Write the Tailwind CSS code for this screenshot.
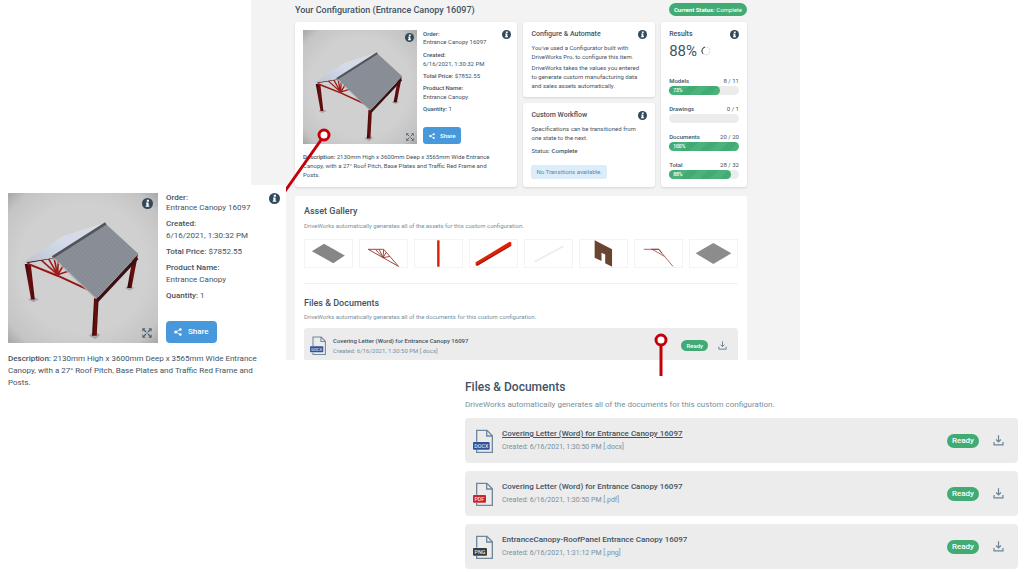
<!DOCTYPE html>
<html lang="en">

<head>
  <meta charset="UTF-8">
  <meta name="viewport" content="width=device-width, initial-scale=1.0">
  <title>DriveWorks - Your Configuration</title>
  <!-- Tailwind CSS -->
  <script src="https://cdn.jsdelivr.net/npm/@tailwindcss/browser@4"></script>
</head>

<body class="bg-white text-[#3f5364] font-['Roboto',sans-serif]">
  <!-- Shared icons -->
  <svg class="absolute size-0" aria-hidden="true">
    <defs>
      <radialGradient id="vignette" cx="50%" cy="50%" r="72%">
        <stop offset="0.6" stop-color="#d0d0d0" />
        <stop offset="0.85" stop-color="#c4c4c4" />
        <stop offset="1" stop-color="#a2a2a2" />
      </radialGradient>
      <linearGradient id="roof-left" x1="0" y1="1" x2="1" y2="0">
        <stop offset="0" stop-color="#bcc3d0" />
        <stop offset="0.5" stop-color="#d3daea" />
        <stop offset="1" stop-color="#dadde3" />
      </linearGradient>
      <linearGradient id="leg" x1="0" y1="0" x2="1" y2="0">
        <stop offset="0" stop-color="#2c0808" />
        <stop offset="0.5" stop-color="#6e0d0d" />
        <stop offset="1" stop-color="#4a0a0a" />
      </linearGradient>
      <pattern id="sheet" width="9" height="9" patternUnits="userSpaceOnUse" patternTransform="rotate(-43)">
        <rect width="9" height="9" fill="#8b9098" />
        <rect width="3" height="9" fill="#858a92" />
      </pattern>
      <pattern id="ribs" width="4" height="4" patternUnits="userSpaceOnUse" patternTransform="rotate(30)">
        <rect width="4" height="4" fill="#8b8b8b" />
        <rect width="4" height="1" fill="#777" />
      </pattern>
    </defs>
    <symbol id="info" viewBox="0 0 30 30">
      <circle cx="15" cy="15" r="15" fill="#2f4a5c" />
      <path d="M13 5h6v5h-6zM11 12h7v9h2v3h-10v-3h2v-6h-1z" fill="#fff" />
    </symbol>
    <symbol id="expand" viewBox="0 0 30 30">
      <path d="M6 6l6 6M24 6l-6 6M6 24l6-6M24 24l-6-6" stroke="#4a6070" stroke-width="3.5" />
      <path d="M1 1h10L1 11zM29 1v10L19 1zM1 29V19l10 10zM29 29H19l10-10z" fill="#4a6070" />
      <circle cx="15" cy="15" r="2" fill="#4a6070" />
    </symbol>
    <symbol id="share" viewBox="0 0 24 24">
      <path d="M19 4L5 12l14 8" fill="none" stroke="#fff" stroke-width="2.5" />
      <circle cx="19" cy="4.500" r="4" fill="#fff" />
      <circle cx="5" cy="12" r="4.500" fill="#fff" />
      <circle cx="19" cy="19.500" r="4" fill="#fff" />
    </symbol>
    <symbol id="download" viewBox="0 0 30 32">
      <path d="M2 20v9h26v-9M15 1v19M8 13l7 7 7-7" fill="none" stroke="#6c8494" stroke-width="3.500" />
    </symbol>
    <symbol id="page" viewBox="0 0 60 72">
      <path d="M11 38V4h31l16 16v50H11v-7M41 4v17h17" fill="none" stroke="#71889a" stroke-width="4" />
    </symbol>
    <symbol id="canopy" viewBox="0 0 448 448">
      <rect width="448" height="448" fill="url(#vignette)" />
      <path d="M60 318l16-8 16 8-16 8zM241 426l18-12 16 9-14 14zM349 284l14-8 14 8-14 7z" fill="#a6a6ae" />
      <path d="M50 212h18l12 106H69z" fill="url(#leg)" />
      <path d="M372 196l16-12-19 100h-13z" fill="url(#leg)" />
      <path d="M257 314l14-4-6 116h-14z" fill="url(#leg)" />
      <path d="M58 211l90 36 102 47" fill="none" stroke="#961616" stroke-width="6" />
      <path d="M148 244L97 198M148 244l-27-48M148 244l-10-48M148 244l2-40M148 244l18-28M148 244l36-12" stroke="#a01c1c" stroke-width="5" />
      <path d="M56 207l80-14" stroke="#47191a" stroke-width="5" />
      <path d="M266 322l120-128" stroke="#3b1013" stroke-width="10" />
      <path d="M44 208L100 170l66-42 115-36 8 4-153 98z" fill="url(#roof-left)" />
      <path d="M134 190L290 90l100 92-126 134z" fill="url(#sheet)" />
      <path d="M133 192L292 91" stroke="#50555c" stroke-width="8" />
      <path d="M134 194l130 122" stroke="#aab0b8" stroke-width="3" />
    </symbol>
  </svg>

  <main class="relative">
    <!-- Configuration dashboard -->
    <section class="ml-[251px] mr-[224px] bg-[#f3f3f3] pl-11 pr-[53px] pt-[3px]">
      <header class="flex h-[13px] items-center justify-between">
        <h1 class="text-[9px] leading-[12px] font-medium">Your Configuration (Entrance Canopy 16097)</h1>
        <span class="rounded-full bg-[#42ab74] px-[5px] text-[6px] leading-[13px] text-white"><b>Current Status:</b> Complete</span>
      </header>

      <div class="mt-[6px] grid grid-cols-[223fr_132fr_86fr] gap-[6px]">
        <article class="rounded-[3px] bg-white py-2 pr-[6px] pl-2 shadow-sm">
          <div class="flex gap-[6px]">
            <div class="relative size-[114px] shrink-0">
              <svg class="size-full" role="img" aria-label="Entrance canopy"><use href="#canopy" /></svg>
              <button class="absolute top-[3px] right-[3px]" aria-label="Image information"><svg class="size-[9px]"><use href="#info" /></svg></button>
              <button class="absolute bottom-[3px] right-[3px]" aria-label="Expand image"><svg class="size-[8px]"><use href="#expand" /></svg></button>
            </div>
            <div class="flex grow flex-col items-start gap-[3px] text-[6px] leading-[9px]">
              <p class="pb-px leading-[8px]"><b class="font-medium">Order:</b><br>Entrance Canopy 16097</p>
              <p><b class="font-medium">Created:</b><br>6/16/2021, 1:30:32 PM</p>
              <p><b class="font-medium">Total Price:</b> $7852.55</p>
              <p><b class="font-medium">Product Name:</b><br>Entrance Canopy</p>
              <p><b class="font-medium">Quantity:</b> 1</p>
              <button class="mt-auto flex items-center gap-[5px] rounded-[3px] bg-[#4799dc] px-[6px] leading-[17px] font-medium text-white">
                <svg class="size-[6px]"><use href="#share" /></svg>Share
              </button>
            </div>
            <button class="self-start" aria-label="Order information"><svg class="size-[9px]"><use href="#info" /></svg></button>
          </div>
          <p class="mt-2 pr-3 text-[6px] leading-[9px]"><b class="font-medium">Description:</b> 2130mm High x 3600mm Deep x 3565mm Wide Entrance Canopy, with a 27° Roof Pitch, Base Plates and Traffic Red Frame and Posts.</p>
        </article>

        <div class="flex flex-col gap-[6px] text-[6px] leading-[9px]">
          <article class="rounded-[3px] bg-white px-2 pt-[6px] pb-[7px] shadow-sm">
            <div class="flex items-center justify-between">
              <h2 class="text-[7px] leading-[12px] font-medium">Configure &amp; Automate</h2>
              <button aria-label="About configuring"><svg class="size-[9px]"><use href="#info" /></svg></button>
            </div>
            <p class="mt-[3px]">You've used a Configurator built with<br>DriveWorks Pro, to configure this item.</p>
            <p class="mt-[2px]">DriveWorks takes the values you entered<br>to generate custom manufacturing data<br>and sales assets automatically.</p>
          </article>
          <article class="grow rounded-[3px] bg-white px-2 pt-[6px] pb-2 shadow-sm">
            <div class="flex items-center justify-between">
              <h2 class="text-[7px] leading-[12px] font-medium">Custom Workflow</h2>
              <button aria-label="About the workflow"><svg class="size-[9px]"><use href="#info" /></svg></button>
            </div>
            <p class="mt-[3px]">Specifications can be transitioned from<br>one state to the next.</p>
            <p class="mt-1">Status: <b class="font-medium">Complete</b></p>
            <p class="mt-[10px] inline-block rounded-[2px] bg-[#dcecf9] px-[5px] leading-[14px] text-[#4b8cc4]">No Transitions available.</p>
          </article>
        </div>

        <article class="flex flex-col rounded-[3px] bg-white px-2 pt-[6px] pb-2 text-[6px] leading-[10px] shadow-sm">
          <div class="flex items-center justify-between">
            <h2 class="text-[7px] leading-[12px] font-medium">Results</h2>
            <button aria-label="About the results"><svg class="size-[9px]"><use href="#info" /></svg></button>
          </div>
          <div class="mt-[3px] flex items-center gap-1 text-[15px] leading-[16px]">88%
            <svg class="size-[10px]" viewBox="0 0 30 30" fill="none" stroke-width="3">
              <circle cx="15" cy="15" r="12" stroke="#e2e2e2" />
              <path d="M6 23A12 12 0 0 1 12 3" stroke="#333" />
            </svg>
          </div>
          <div class="mt-auto flex flex-col gap-[9px]">
            <div>
              <div class="flex justify-between"><b class="font-medium">Models</b><span>8 / 11</span></div>
              <div class="h-[9px] rounded-full bg-[#ececec]">
                <div class="h-full rounded-full bg-[repeating-linear-gradient(135deg,#42ab74_0_7px,#4db17c_7px_14px)] pl-1 text-[5px] leading-[9px] font-medium text-white" style="width: 73%">73%</div>
              </div>
            </div>
            <div>
              <div class="flex justify-between"><b class="font-medium">Drawings</b><span>0 / 1</span></div>
              <div class="h-[9px] rounded-full bg-[#ececec]"></div>
            </div>
            <div>
              <div class="flex justify-between"><b class="font-medium">Documents</b><span>20 / 20</span></div>
              <div class="h-[9px] rounded-full bg-[#ececec]">
                <div class="h-full rounded-full bg-[repeating-linear-gradient(135deg,#42ab74_0_7px,#4db17c_7px_14px)] pl-1 text-[5px] leading-[9px] font-medium text-white" style="width: 100%">100%</div>
              </div>
            </div>
            <div>
              <div class="flex justify-between"><b class="font-medium">Total</b><span>28 / 32</span></div>
              <div class="h-[9px] rounded-full bg-[#ececec]">
                <div class="h-full rounded-full bg-[repeating-linear-gradient(135deg,#42ab74_0_7px,#4db17c_7px_14px)] pl-1 text-[5px] leading-[9px] font-medium text-white" style="width: 88%">88%</div>
              </div>
            </div>
          </div>
        </article>
      </div>

      <div class="mt-[9px] rounded-t-[3px] bg-white px-[9px] pt-[9px]">
        <h2 class="text-[9px] leading-[12px] font-medium">Asset Gallery</h2>
        <p class="mt-1 text-[6px] leading-[9px] text-[#78909c]">DriveWorks automatically generates all of the assets for this custom configuration.</p>
        <div class="mt-[9px] grid grid-cols-8 gap-[6px]">
          <svg class="h-[29px] w-full border border-[#f3f3f3]" viewBox="0 0 147 87"><path d="M20 36l39-24 67 38-37 25z" fill="url(#ribs)" /></svg>
          <svg class="h-[29px] w-full border border-[#f3f3f3]" viewBox="0 0 147 87" fill="none" stroke="#963c36" stroke-width="3">
            <path d="M24 30h50l48 55L72 57z" /><path d="M72 57L48 31M72 57L60 31M72 57l2-26M72 57l10-17M72 57l22-4" />
          </svg>
          <svg class="h-[29px] w-full border border-[#f3f3f3]" viewBox="0 0 147 87"><path d="M69 1h8v85h-8z" fill="#d9240b" /></svg>
          <svg class="h-[29px] w-full border border-[#f3f3f3]" viewBox="0 0 147 87"><path d="M16 72L125 6l6 2v10L22 82l-6-1z" fill="#df2107" /><path d="M17 81l5-3L130 16v3L22 83z" fill="#9f1a0b" /></svg>
          <svg class="h-[29px] w-full border border-[#f3f3f3]" viewBox="0 0 147 87"><path d="M29 70l92-50" stroke="#ebebeb" stroke-width="5" /></svg>
          <svg class="h-[29px] w-full border border-[#f3f3f3]" viewBox="0 0 147 87"><path d="M45 1l56 29v56L79 75V47l-12-6v27L45 57z" fill="#67452f" /></svg>
          <svg class="h-[29px] w-full border border-[#f3f3f3]" viewBox="0 0 147 87" fill="none" stroke="#b05a58" stroke-width="3"><path d="M26 30h48l46 55M55 31l38 22" /><path d="M50 30h25l9 12" stroke="#813636" /></svg>
          <svg class="h-[29px] w-full border border-[#f3f3f3]" viewBox="0 0 147 87"><path d="M16 43l57-33 58 33-58 34z" fill="#8c8c8c" /></svg>
        </div>
        <hr class="mt-[15px] border-[#f0f0f0]">
        <h2 class="mt-[13px] text-[9px] leading-[12px] font-medium">Files &amp; Documents</h2>
        <p class="mt-[3px] text-[6px] leading-[9px] text-[#78909c]">DriveWorks automatically generates all of the documents for this custom configuration.</p>
        <div class="mt-[7px] flex items-center gap-[7px] rounded-t-[3px] bg-[#ececec] pt-2 pr-[11px] pb-[5px] pl-[6px]">
          <svg class="h-[19px] w-4" viewBox="0 0 60 72"><use href="#page" /><rect y="39" width="50" height="23" rx="3" fill="#2d529c" /><text x="25" y="56" text-anchor="middle" font-size="16" fill="#fff">DOCX</text></svg>
          <div class="grow text-[6px] leading-[10px]">
            <a href="#" class="block font-medium">Covering Letter (Word) for Entrance Canopy 16097</a>
            <p class="leading-[9px] text-[#78909c]">Created: 6/16/2021, 1:30:50 PM [.docx]</p>
          </div>
          <span class="rounded-full bg-[#42ab74] px-[5px] text-[6px] leading-[11px] font-medium text-white">Ready</span>
          <button class="ml-[3px]" aria-label="Download covering letter"><svg class="size-[9px]"><use href="#download" /></svg></button>
        </div>
      </div>
    </section>

    <!-- Callout lines -->
    <svg class="absolute top-[126px] left-[280px] h-[70px] w-[56px]" viewBox="0 0 56 70" fill="none" stroke="#c40009">
      <path d="M41 14L3 68" stroke-width="3" />
      <circle cx="44" cy="9" r="5" fill="#fff" stroke-width="3" />
    </svg>
    <svg class="absolute top-[333px] left-[654px] h-[43px] w-[14px]" viewBox="0 0 14 43" fill="none" stroke="#c40009">
      <path d="M7 12v31" stroke-width="3" />
      <circle cx="7" cy="7" r="5" fill="#fff" stroke-width="3" />
    </svg>

    <!-- Enlarged order details -->
    <section class="absolute top-[185px] left-0 w-[286px] bg-white pt-2 pr-[6px] pb-1 pl-2">
      <div class="flex gap-2">
        <div class="relative size-[150px] shrink-0">
          <svg class="size-full" role="img" aria-label="Entrance canopy"><use href="#canopy" /></svg>
          <button class="absolute top-[5px] right-[5px]" aria-label="Image information"><svg class="size-[11px]"><use href="#info" /></svg></button>
          <button class="absolute right-[6px] bottom-[5px]" aria-label="Expand image"><svg class="size-[10px]"><use href="#expand" /></svg></button>
        </div>
        <div class="flex grow flex-col items-start gap-1 text-[8px] leading-[12px]">
          <p class="pb-px leading-[10px]"><b class="font-medium">Order:</b><br>Entrance Canopy 16097</p>
          <p><b class="font-medium">Created:</b><br>6/16/2021, 1:30:32 PM</p>
          <p><b class="font-medium">Total Price:</b> $7852.55</p>
          <p><b class="font-medium">Product Name:</b><br>Entrance Canopy</p>
          <p><b class="font-medium">Quantity:</b> 1</p>
          <button class="mt-auto flex items-center gap-[6px] rounded-[4px] bg-[#4799dc] px-2 leading-[22px] font-medium text-white">
            <svg class="size-[8px]"><use href="#share" /></svg>Share
          </button>
        </div>
        <button class="self-start" aria-label="Order information"><svg class="size-[11px]"><use href="#info" /></svg></button>
      </div>
      <p class="mt-[10px] pr-3 text-[8px] leading-[12px]"><b class="font-medium">Description:</b> 2130mm High x 3600mm Deep x 3565mm Wide Entrance Canopy, with a 27° Roof Pitch, Base Plates and Traffic Red Frame and Posts.</p>
    </section>

    <!-- Enlarged file list -->
    <section class="ml-[465px] pt-5 pr-[6px]">
      <h2 class="text-[12px] leading-[14px] font-medium">Files &amp; Documents</h2>
      <p class="mt-[6px] text-[8px] leading-[10px] text-[#78909c]">DriveWorks automatically generates all of the documents for this custom configuration.</p>
      <ul class="mt-2 flex flex-col gap-2">
        <li class="flex items-center gap-[9px] rounded-[4px] bg-[#ececec] py-[10px] pr-[14px] pl-2">
          <svg class="h-6 w-5" viewBox="0 0 60 72"><use href="#page" /><rect y="39" width="50" height="23" rx="3" fill="#2d529c" /><text x="25" y="56" text-anchor="middle" font-size="16" fill="#fff">DOCX</text></svg>
          <div class="grow leading-[12px]">
            <a href="#" class="block text-[8px] font-medium underline">Covering Letter (Word) for Entrance Canopy 16097</a>
            <p class="mt-px text-[7px] text-[#78909c]">Created: 6/16/2021, 1:30:50 PM [.docx]</p>
          </div>
          <span class="rounded-full bg-[#42ab74] px-[5px] text-[8px] leading-[14px] font-medium text-white">Ready</span>
          <button class="ml-[5px]" aria-label="Download covering letter, Word"><svg class="h-[11px] w-[11px]"><use href="#download" /></svg></button>
        </li>
        <li class="flex items-center gap-[9px] rounded-[4px] bg-[#ececec] py-[10px] pr-[14px] pl-2">
          <svg class="h-6 w-5" viewBox="0 0 60 72"><use href="#page" /><rect y="39" width="39" height="23" rx="3" fill="#c8282d" /><text x="19" y="56" text-anchor="middle" font-size="16" fill="#fff">PDF</text></svg>
          <div class="grow leading-[12px]">
            <a href="#" class="block text-[8px] font-medium">Covering Letter (Word) for Entrance Canopy 16097</a>
            <p class="mt-px text-[7px] text-[#78909c]">Created: 6/16/2021, 1:30:50 PM [.pdf]</p>
          </div>
          <span class="rounded-full bg-[#42ab74] px-[5px] text-[8px] leading-[14px] font-medium text-white">Ready</span>
          <button class="ml-[5px]" aria-label="Download covering letter, PDF"><svg class="h-[11px] w-[11px]"><use href="#download" /></svg></button>
        </li>
        <li class="flex items-center gap-[9px] rounded-[4px] bg-[#ececec] py-[10px] pr-[14px] pl-2">
          <svg class="h-6 w-5" viewBox="0 0 60 72"><use href="#page" /><rect y="39" width="42" height="23" rx="3" fill="#3c3c3c" /><text x="21" y="56" text-anchor="middle" font-size="16" fill="#fff">PNG</text></svg>
          <div class="grow leading-[12px]">
            <a href="#" class="block text-[8px] font-medium">EntranceCanopy-RoofPanel Entrance Canopy 16097</a>
            <p class="mt-px text-[7px] text-[#78909c]">Created: 6/16/2021, 1:31:12 PM [.png]</p>
          </div>
          <span class="rounded-full bg-[#42ab74] px-[5px] text-[8px] leading-[14px] font-medium text-white">Ready</span>
          <button class="ml-[5px]" aria-label="Download roof panel image"><svg class="h-[11px] w-[11px]"><use href="#download" /></svg></button>
        </li>
      </ul>
    </section>
  </main>
</body>

</html>
